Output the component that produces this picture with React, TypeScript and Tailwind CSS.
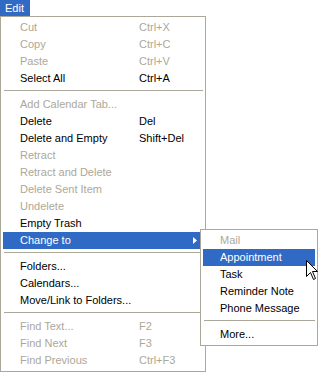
type Item =
  | { sep: true }
  | { sep?: false; label: string; keys?: string; off?: boolean; hot?: boolean; sub?: boolean }

const mainItems: Item[] = [
  { label: 'Cut', keys: 'Ctrl+X', off: true },
  { label: 'Copy', keys: 'Ctrl+C', off: true },
  { label: 'Paste', keys: 'Ctrl+V', off: true },
  { label: 'Select All', keys: 'Ctrl+A' },
  { sep: true },
  { label: 'Add Calendar Tab...', off: true },
  { label: 'Delete', keys: 'Del' },
  { label: 'Delete and Empty', keys: 'Shift+Del' },
  { label: 'Retract', off: true },
  { label: 'Retract and Delete', off: true },
  { label: 'Delete Sent Item', off: true },
  { label: 'Undelete', off: true },
  { label: 'Empty Trash' },
  { label: 'Change to', hot: true, sub: true },
  { sep: true },
  { label: 'Folders...' },
  { label: 'Calendars...' },
  { label: 'Move/Link to Folders...' },
  { sep: true },
  { label: 'Find Text...', keys: 'F2', off: true },
  { label: 'Find Next', keys: 'F3', off: true },
  { label: 'Find Previous', keys: 'Ctrl+F3', off: true },
]

const subItems: Item[] = [
  { label: 'Mail', off: true },
  { label: 'Appointment', hot: true },
  { label: 'Task' },
  { label: 'Reminder Note' },
  { label: 'Phone Message' },
  { sep: true },
  { label: 'More...' },
]

function MenuRows({ items }: { items: Item[] }) {
  return (
    <>
      {items.map((it, i) =>
        it.sep ? (
          <div key={i} className="h-[9px] pt-[3px] pl-px">
            <div className="h-px bg-[#aca899]" />
          </div>
        ) : (
          <div
            key={i}
            className={`h-[17px] flex items-center pl-[17px] whitespace-nowrap ${
              it.hot ? 'bg-[#316ac5] text-white' : it.off ? 'text-[#aca899]' : 'text-black'
            }`}
          >
            <span className="w-[119px] shrink-0">{it.label}</span>
            {it.keys && <span>{it.keys}</span>}
            {it.sub && (
              <svg width="4" height="7" viewBox="0 0 4 7" className="ml-[54px]">
                <polygon points="0,0 4,3.5 0,7" fill="#fff" />
              </svg>
            )}
          </div>
        )
      )}
    </>
  )
}

export default function App() {
  return (
    <div className="relative w-[319px] h-[372px] bg-white text-[11px] font-['Liberation_Sans',Arial,sans-serif] overflow-hidden">
      <div className="h-4 w-[30px] bg-[#316ac5] text-white pl-[5px] leading-4">Edit</div>
      <div className="w-[206px] border border-[#aca899] bg-white p-[2px]">
        <MenuRows items={mainItems} />
      </div>

      {/* submenu */}
      <div className="absolute left-[200px] top-[229px] w-[118px] border border-[#aca899] bg-white p-[2px]">
        <MenuRows items={subItems} />
      </div>

      {/* mouse pointer */}
      <svg className="absolute left-[306px] top-[260px]" width="13" height="21" viewBox="0 0 13 21">
        <polygon
          points="0.5,0.5 0.5,16.5 4.5,12.5 7.5,19.5 9.5,18.5 6.5,11.5 11.5,11.5"
          fill="#fff"
          stroke="#000"
          strokeWidth="1"
          strokeLinejoin="miter"
        />
      </svg>
    </div>
  )
}
